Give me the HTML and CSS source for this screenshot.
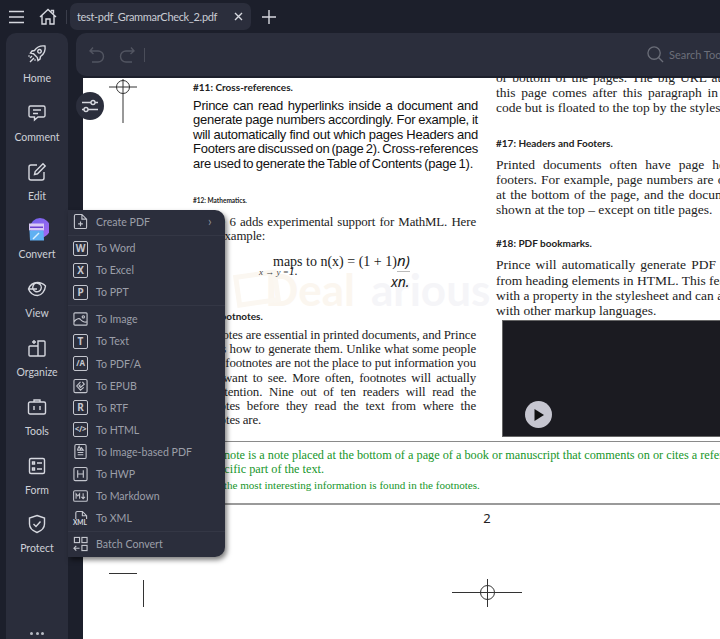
FILE: index.html
```html
<!DOCTYPE html>
<html lang="en">
<head>
<meta charset="utf-8">
<title>test-pdf_GrammarCheck_2.pdf</title>
<link rel="stylesheet" href="styles.css">
</head>
<body>
<div class="app">
  <header class="topbar">
    <svg class="ic-menu" width="16" height="14" viewBox="0 0 16 14"><path d="M0 1.500h15M0 7h15M0 12.500h15"/></svg>
    <svg class="ic-home" width="18" height="18" viewBox="0 0 18 18"><path d="M1 9 9 1.500 17 9M3 7.500v8.500h4v-5h4v5h4V7.500M12.500 3.500V2.500h2v3"/></svg>
    <span class="top-div"></span>
    <div class="tab"><span class="tab-name">test-pdf_GrammarCheck_2.pdf</span><svg class="ic-close" width="9" height="9" viewBox="0 0 9 9"><path d="M1 1l7 7M8 1 1 8"/></svg></div>
    <svg class="ic-plus" width="16" height="16" viewBox="0 0 16 16"><path d="M8 1v14M1 8h14"/></svg>
  </header>
  <div class="body">
    <nav class="sidebar">
      <div class="side-item"><svg width="20" height="20" viewBox="0 0 20 20"><path d="M18 2c-4-.6-8 .8-10.500 4.500L5 7 3.500 9l3 .7 3.800 3.800.7 3 2-1.500.5-2.500C17.200 10 18.600 6 18 2zM12.500 5.500a1.800 1.800 0 1 0 .01 0M5 12l-2 2M7 14l-4 4M2.500 11.500l-1 1M8.500 15.500l-1 1"/></svg><span>Home</span></div>
      <div class="side-item"><svg width="20" height="20" viewBox="0 0 20 20"><path d="M3.500 3h13A1.500 1.500 0 0 1 18 4.500v8a1.500 1.500 0 0 1-1.500 1.500H11l-3.500 3v-3h-4A1.500 1.500 0 0 1 2 12.500v-8A1.500 1.500 0 0 1 3.500 3zM6 7h8M6 10.500h5"/></svg><span>Comment</span></div>
      <div class="side-item"><svg width="20" height="20" viewBox="0 0 20 20"><path d="M10 3H4a2 2 0 0 0-2 2v11a2 2 0 0 0 2 2h11a2 2 0 0 0 2-2v-6M7.500 12.500l.7-3L16 1.800 18.200 4l-7.700 7.800z"/></svg><span>Edit</span></div>
      <div class="side-item"><svg class="ic-conv" width="24" height="24" viewBox="0 0 24 24"><defs><linearGradient id="gr" x1="0" y1="0" x2="1" y2="1"><stop offset="0" stop-color="#6f63ee"/><stop offset="1" stop-color="#a868f0"/></linearGradient></defs><circle cx="15" cy="10" r="10" fill="url(#gr)"/><path d="M4 5.500h15v7H4z" fill="#d8c8f5"/><path d="M5 8.500h13V10H5z" fill="#6b3fd0"/><path d="M4.500 12.500h14l.5 10H5z" fill="#5fb0f2"/><path d="M8 21l6-6" stroke="#d8efff" stroke-width="1.500" fill="none"/></svg><span>Convert</span></div>
      <div class="side-item"><svg width="20" height="20" viewBox="0 0 20 20"><path d="M1.500 10c1.500-4 5-6.500 9-6.500 3.500 0 6 1.500 8 3.500-.5 5-4 9.500-8 9.500-4.500 0-7.500-2.500-9-6.500zM2 10h8M6 7a4 4 0 1 0 8 3 4 4 0 0 0-8-3z"/></svg><span>View</span></div>
      <div class="side-item"><svg width="20" height="20" viewBox="0 0 20 20"><path d="M11 3h6a1 1 0 0 1 1 1v13a1 1 0 0 1-1 1h-6zM11 8H3a1 1 0 0 0-1 1v8a1 1 0 0 0 1 1h8M7 2v4M5 4h4"/></svg><span>Organize</span></div>
      <div class="side-item"><svg width="20" height="20" viewBox="0 0 20 20"><path d="M3 5h14a1.500 1.500 0 0 1 1.500 1.500v9A1.500 1.500 0 0 1 17 17H3a1.500 1.500 0 0 1-1.500-1.500v-9A1.500 1.500 0 0 1 3 5zM7 5V3h6v2M7 9v4M13 9v4"/></svg><span>Tools</span></div>
      <div class="side-item"><svg width="20" height="20" viewBox="0 0 20 20"><path d="M4 2.500h12A1.500 1.500 0 0 1 17.500 4v12a1.500 1.500 0 0 1-1.500 1.500H4A1.500 1.500 0 0 1 2.500 16V4A1.500 1.500 0 0 1 4 2.500zM10 7h5M10 13h5M5.500 6h2v2h-2zM5.500 12h2v2h-2z"/></svg><span>Form</span></div>
      <div class="side-item"><svg width="20" height="20" viewBox="0 0 20 20"><path d="M10 1.500l7.500 2.500v6c0 4-3.500 7-7.500 8.500C6 17 2.500 14 2.500 10V4zM6.500 10l2.500 2.500 4.500-5"/></svg><span>Protect</span></div>
      <div class="side-more"><i></i><i></i><i></i></div>
    </nav>
    <main class="main">
      <div class="toolbar">
        <svg class="tb-ic" width="18" height="18" viewBox="0 0 18 18"><path d="M5 1.500 2 5l3.500 3M2 5h8a5.500 5.500 0 0 1 0 11H4"/></svg>
        <svg class="tb-ic tb-redo" width="18" height="18" viewBox="0 0 18 18"><path d="M13 1.500 16 5l-3.500 3M16 5H8a5.500 5.500 0 0 0 0 11h6"/></svg>
        <span class="tb-div"></span>
        <div class="search"><svg width="17" height="17" viewBox="0 0 18 18"><circle cx="7.500" cy="7.500" r="6.500"/><path d="M12.200 12.200 17 17"/></svg><span>Search Tools</span></div>
      </div>
      <div class="doc">
        <div class="page">
          <div class="watermark"><span class="wm-box"></span><span class="wm-a">Deal</span><span class="wm-b">arious</span></div>
          <div class="cols">
            <section class="col col-a">
              <h3 class="hd">#11: Cross-references.</h3>
              <p class="sans">
                <span class="ln">Prince can read hyperlinks inside a document and</span>
                <span class="ln">generate page numbers accordingly. For example, it</span>
                <span class="ln">will automatically find out which pages Headers and</span>
                <span class="ln">Footers are discussed on (page 2). Cross-references</span>
                <span class="ln ln-short">are used to generate the Table of Contents (page 1).</span>
              </p>
              <h4 class="hd-sm">#12: Mathematics.</h4>
              <p class="serif tight">
                <span class="ln">Prince 6 adds experimental support for MathML. Here</span>
                <span class="ln left">is an example:</span>
              </p>
              <div class="math">
                <div class="math-main">maps to n(x) = (1 + 1)<em>n)</em></div>
                <div class="math-over">x → y =<i>1.</i></div>
                <div class="math-den">xn.</div>
              </div>
              <h3 class="hd hd-fn">#13: Footnotes.</h3>
              <p class="serif tight">
                <span class="ln">Footnotes are essential in printed documents, and Prince</span>
                <span class="ln">knows how to generate them. Unlike what some people</span>
                <span class="ln">think, footnotes are not the place to put information you</span>
                <span class="ln">don't want to see. More often, footnotes will actually</span>
                <span class="ln">get attention. Nine out of ten readers will read the</span>
                <span class="ln">footnotes before they read the text from where the</span>
                <span class="ln left">footnotes are.</span>
              </p>
            </section>
            <section class="col col-b">
              <p class="serif">
                <span class="ln">or bottom of the pages. The big URL at the top of</span>
                <span class="ln">this page comes after this paragraph in the source</span>
                <span class="ln left">code but is floated to the top by the stylesheet.</span>
              </p>
              <h3 class="hd hd-17">#17: Headers and Footers.</h3>
              <p class="serif">
                <span class="ln">Printed documents often have page headers and</span>
                <span class="ln">footers. For example, page numbers are often found</span>
                <span class="ln">at the bottom of the page, and the document title is</span>
                <span class="ln left">shown at the top – except on title pages.</span>
              </p>
              <h3 class="hd hd-18">#18: PDF bookmarks.</h3>
              <p class="serif">
                <span class="ln">Prince will automatically generate PDF bookmarks</span>
                <span class="ln">from heading elements in HTML. This feature is enabled</span>
                <span class="ln">with a property in the stylesheet and can also be used</span>
                <span class="ln left">with other markup languages.</span>
              </p>
              <div class="video"><span class="play"><svg width="12" height="12" viewBox="0 0 12 12"><path d="M1.500 0 11 6l-9.500 6z"/></svg></span></div>
            </section>
          </div>
          <div class="notes">
            <p class="note">A footnote is a note placed at the bottom of a page of a book or manuscript that comments on or cites a reference for a</p>
            <p class="note note-in">specific part of the text.</p>
            <p class="note note-sm">Often, the most interesting information is found in the footnotes.</p>
          </div>
          <div class="pageno">2</div>
          <svg class="mark mark-top" width="30" height="46" viewBox="0 0 30 46"><path d="M0 9h28M14 1v44"/><circle cx="14" cy="9" r="6.500"/></svg>
          <svg class="mark mark-bot" width="72" height="30" viewBox="0 0 72 30"><path d="M0 14.500h70M35.500 1v28"/><circle cx="35.500" cy="14.500" r="7"/></svg>
          <svg class="mark mark-corner" width="36" height="36" viewBox="0 0 36 36"><path d="M0 .5h28M34.500 7v27"/></svg>
        </div>
        <button class="filter" type="button"><svg width="18" height="14" viewBox="0 0 18 14"><path d="M1 3.500h9M14 3.500h3M1 10.500h2M7 10.500h10"/><circle cx="12" cy="3.500" r="2"/><circle cx="5" cy="10.500" r="2"/></svg></button>
      </div>
    </main>
  </div>
  <div class="menu">
    <div class="m-row m-first"><svg width="16" height="17" viewBox="0 0 16 17"><path d="M9.500 1H3a1.500 1.500 0 0 0-1.500 1.500v12A1.500 1.500 0 0 0 3 16h10a1.500 1.500 0 0 0 1.500-1.500V6zM9.500 1v5h5M8 8.500v5M5.500 11h5"/></svg><span>Create PDF</span><b class="chev">›</b></div>
    <div class="m-sep"></div>
    <div class="m-row"><span class="box">W</span><span>To Word</span></div>
    <div class="m-row"><span class="box">X</span><span>To Excel</span></div>
    <div class="m-row"><span class="box">P</span><span>To PPT</span></div>
    <div class="m-sep m-sep-b"></div>
    <div class="m-row"><svg width="16" height="16" viewBox="0 0 16 16"><path d="M2 1.500h12a1 1 0 0 1 1 1v11a1 1 0 0 1-1 1H2a1 1 0 0 1-1-1v-11a1 1 0 0 1 1-1zM1 11c3-4 6-4 7-2.500S12 12 15 11M11 4.500a1.200 1.200 0 1 0 .01 0"/></svg><span>To Image</span></div>
    <div class="m-row"><span class="box">T</span><span>To Text</span></div>
    <div class="m-row"><span class="box box-sm">/A</span><span>To PDF/A</span></div>
    <div class="m-row"><svg width="16" height="16" viewBox="0 0 16 16"><rect x="1" y="1" width="14" height="14" rx="1.500"/><path d="M8 3.500 4 8l4 4.500 3.500-3M8 6.500 6.500 8 8 9.500l4-3.500-2-2.500" /></svg><span>To EPUB</span></div>
    <div class="m-row"><span class="box">R</span><span>To RTF</span></div>
    <div class="m-row"><span class="box box-sm">&lt;/&gt;</span><span>To HTML</span></div>
    <div class="m-row"><svg width="16" height="17" viewBox="0 0 16 17"><rect x="2" y="1" width="12" height="15" rx="1.500"/><path d="M5 6l1.500-3L8 6l1-1.500L11 7H5zM5 9.500h6M5 12h6"/></svg><span>To Image-based PDF</span></div>
    <div class="m-row"><svg width="16" height="16" viewBox="0 0 16 16"><rect x="1" y="1" width="14" height="14" rx="1.500"/><path d="M5 4v8M11 4v8M5 8h6"/></svg><span>To HWP</span></div>
    <div class="m-row"><svg width="17" height="14" viewBox="0 0 17 14"><rect x=".7" y="1" width="15.600" height="12" rx="1.500"/><path d="M3.500 10V4.500L5.500 7l2-2.500V10M11.500 4v6M9.500 8l2 2 2-2"/></svg><span>To Markdown</span></div>
    <div class="m-row m-xml"><svg width="16" height="17" viewBox="0 0 16 17"><path d="M3 9V2.500A1.500 1.500 0 0 1 4.500 1H10l4.500 4.500v9A1.500 1.500 0 0 1 13 16M10 1v4.500h4.500"/></svg><em class="xml">XML</em><span>To XML</span></div>
    <div class="m-sep"></div>
    <div class="m-row m-last"><svg width="16" height="16" viewBox="0 0 16 16"><rect x="1.500" y="1" width="5.500" height="5.500"/><rect x="9.500" y="1" width="5.500" height="5.500"/><rect x="9.500" y="9.500" width="5.500" height="5.500"/><path d="M1 12.500h6M3.500 10 1 12.500 3.500 15"/></svg><span>Batch Convert</span></div>
  </div>
</div>
</body>
</html>
```

FILE: styles.css
```css
* { box-sizing: border-box; margin: 0; padding: 0; }
html, body { width: 720px; height: 639px; overflow: hidden; background: #1c1f2b; }
body { font-family: Lato, sans-serif; }
svg { fill: none; stroke: #d6d8df; stroke-width: 1.400; flex: none; }

.app { position: relative; width: 720px; height: 639px; display: flex; flex-direction: column; overflow: hidden; }

.topbar { height: 33px; display: flex; align-items: center; flex: none; padding-left: 9px; }
.ic-home { margin-left: 14px; }
.top-div { width: 1px; height: 14px; background: #3a3d4a; margin-left: 9px; }
.tab { width: 181px; height: 27px; margin-left: 3px; background: #2b2e3c; border-radius: 7px; display: flex; align-items: center; justify-content: space-between; padding: 0 8px 0 7px; }
.tab-name { font-size: 11px; letter-spacing: -.33px; color: #c9ccd4; white-space: nowrap; }
.ic-plus { margin-left: 10px; }

.body { flex: 1; display: flex; min-height: 0; }
.sidebar { width: 62px; margin-left: 6px; background: #2a2d3b; border-radius: 10px 10px 0 0; display: flex; flex-direction: column; align-items: center; padding-top: 11px; flex: none; position: relative; }
.side-item { height: 58.800px; display: flex; flex-direction: column; align-items: center; flex: none; width: 100%; }
.side-item svg { height: 20px; }
.side-item .ic-conv { margin-top: -2px; height: 24px; width: 24px; stroke: none; }
.side-item span { font-size: 10.500px; line-height: 15px; color: #cdd0d8; margin-top: 7px; }
.side-item .ic-conv + span { margin-top: 5px; }
.side-more { display: flex; gap: 2.500px; margin-top: auto; margin-bottom: 4px; }
.side-more i { width: 3px; height: 3px; border-radius: 50%; background: #b8bbc4; }

.main { flex: 1; min-width: 0; display: flex; flex-direction: column; padding-left: 8px; }
.toolbar { height: 43px; flex: none; background: #2b2e3c; border-radius: 10px 0 0 10px; display: flex; align-items: center; padding-left: 12px; }
.tb-ic { stroke: #525561; }
.tb-redo { margin-left: 12px; }
.tb-div { width: 1px; height: 14px; background: #4a4d59; margin-left: 8px; }
.search { margin-left: auto; display: flex; align-items: center; width: 73px; gap: 5px; overflow: hidden; flex: none; }
.search svg { stroke: #6a6d78; }
.search span { font-size: 11px; color: #6c6f7a; white-space: nowrap; }

.doc { flex: 1; min-height: 0; padding: 2px 0 0 7px; position: relative; }
.page { position: relative; height: 100%; background: #fff; overflow: hidden; color: #1a1a1a; }

.cols { display: flex; gap: 18px; padding-left: 110px; height: 356px; }
.col { width: 285px; flex: none; }
.col-a { padding-top: 3px; }
.col-b { margin-top: -8px; }
.ln { display: block; white-space: nowrap; text-align: justify; text-align-last: justify; }
.ln.left { text-align: left; text-align-last: left; }
.ln-short { width: 280px; }

.hd { font-family: "Lato", sans-serif; font-size: 10px; font-weight: 700; line-height: 13px; color: #222; white-space: nowrap; }
.hd-sm { font-family: "Lato", sans-serif; font-size: 6.500px; font-weight: 700; line-height: 9px; color: #222; margin-top: 25px; }
.hd-fn { margin-top: 15px; }
.hd-17 { margin-top: 21px; }
.hd-18 { margin-top: 20px; }
.sans { font-family: "Liberation Sans", sans-serif; font-size: 13px; line-height: 14.400px; margin-top: 5px; color: #111; letter-spacing: -.25px; word-spacing: -1.500px; }
.serif { font-family: "Liberation Serif", serif; font-size: 13.500px; line-height: 15.200px; color: #222; }
.hd + .serif { margin-top: 7px; }
.hd-fn + .serif { margin-top: 5px; }
.tight { line-height: 14.300px; font-size: 12.900px; width: 283px; letter-spacing: -.12px; word-spacing: -.3px; }
.hd-sm + .serif { margin-top: 10px; }

.math { height: 51px; position: relative; font-family: "Liberation Serif", serif; font-size: 14px; }
.math-main { padding: 5px 0 0 80px; white-space: nowrap; }
.math-main em { display: inline-block; font-family: "Noto Sans", sans-serif; font-size: 15px; line-height: 22px; font-style: italic; border-bottom: 1px solid #bbb; }
.math-over { position: absolute; left: 66px; top: 20px; font-size: 9px; font-style: italic; color: #444; white-space: nowrap; }
.math-over i { font-size: 12px; color: #222; }
.math-den { position: absolute; left: 198px; top: 28px; font-family: "Noto Sans", sans-serif; font-style: italic; font-size: 14px; }

.video { margin: 2px 0 0 6px; width: 285px; height: 117px; background: #1b1b21; border: 1px solid #666; display: flex; align-items: flex-end; padding: 0 0 8px 22px; }
.play { width: 27px; height: 27px; border-radius: 50%; background: #c6c6d0; display: flex; align-items: center; justify-content: center; }
.play svg { fill: #111; stroke: none; }

.notes { margin-top: 7px; border-top: 1px solid #8a8a8a; border-bottom: 2px solid #9a9a9a; height: 64px; padding: 6px 0 0 110px; color: #16962a; font-family: "Liberation Serif", serif; }
.note { font-size: 12.250px; line-height: 14px; white-space: nowrap; }
.note-in { padding-left: 15px; }
.note-sm { font-size: 11.100px; margin-top: 2px; }
.pageno { text-align: center; font-family: "Noto Sans", sans-serif; font-size: 13px; line-height: 18px; margin-top: 4px; padding-left: 171px; width: 637px; color: #222; }

.watermark { position: absolute; left: 182px; top: 185px; display: flex; align-items: center; font-family: "Lato", sans-serif; font-weight: 700; font-size: 44px; white-space: nowrap; }
.wm-a { color: #fbf6ef; }
.wm-b { color: #f5f5f8; margin-left: 16px; }
.wm-box { position: absolute; left: -30px; top: 9px; width: 44px; height: 33px; border: 5px solid #fbf7f1; transform: rotate(-8deg); }
.cols, .notes, .pageno { position: relative; z-index: 1; }

.mark { position: absolute; stroke: #333; stroke-width: 1; }
.mark-top { left: 26px; top: 0; }
.mark-bot { left: 369px; top: 500px; }
.mark-corner { left: 26px; top: 495px; }

.filter { position: absolute; left: 0; top: 16px; width: 28px; height: 28px; border: 0; border-radius: 50%; background: #2b2e3c; display: flex; align-items: center; justify-content: center; z-index: 2; }

.menu { position: absolute; left: 68px; top: 210px; width: 157px; height: 347px; background: #2b2e3c; border-radius: 0 10px 10px 0; box-shadow: 2px 3px 5px rgba(0,0,0,.5); z-index: 5; }
.m-row { height: 22.100px; display: flex; align-items: center; gap: 8px; padding-left: 5px; position: relative; }
.m-first { height: 23px; }
.m-row span:not(.box) { font-size: 10.600px; color: #9c9fa9; white-space: nowrap; }
.m-row svg { stroke: #c4c6ce; stroke-width: 1.200; width: 15px; }
.box { width: 15px; height: 15px; flex: none; border: 1.200px solid #c4c6ce; border-radius: 2px; font-family: "Noto Sans", sans-serif; font-size: 10px; font-weight: 700; line-height: 12px; color: #c4c6ce; text-align: center; }
.box-sm { font-size: 8px; letter-spacing: -.3px; }
.chev { position: absolute; left: 140px; top: 3px; font-weight: 400; font-size: 13px; color: #8c8f99; }
.m-sep { height: 1px; background: #343745; margin: 1.500px 0 1.500px; }
.m-sep-b { margin: 2px 0 2px; }
.xml { position: absolute; left: 4px; top: 12px; font-style: normal; font-weight: 700; font-size: 6.500px; color: #d6d8df; background: #2b2e3c; padding: 0 1px; line-height: 8px; }
```
